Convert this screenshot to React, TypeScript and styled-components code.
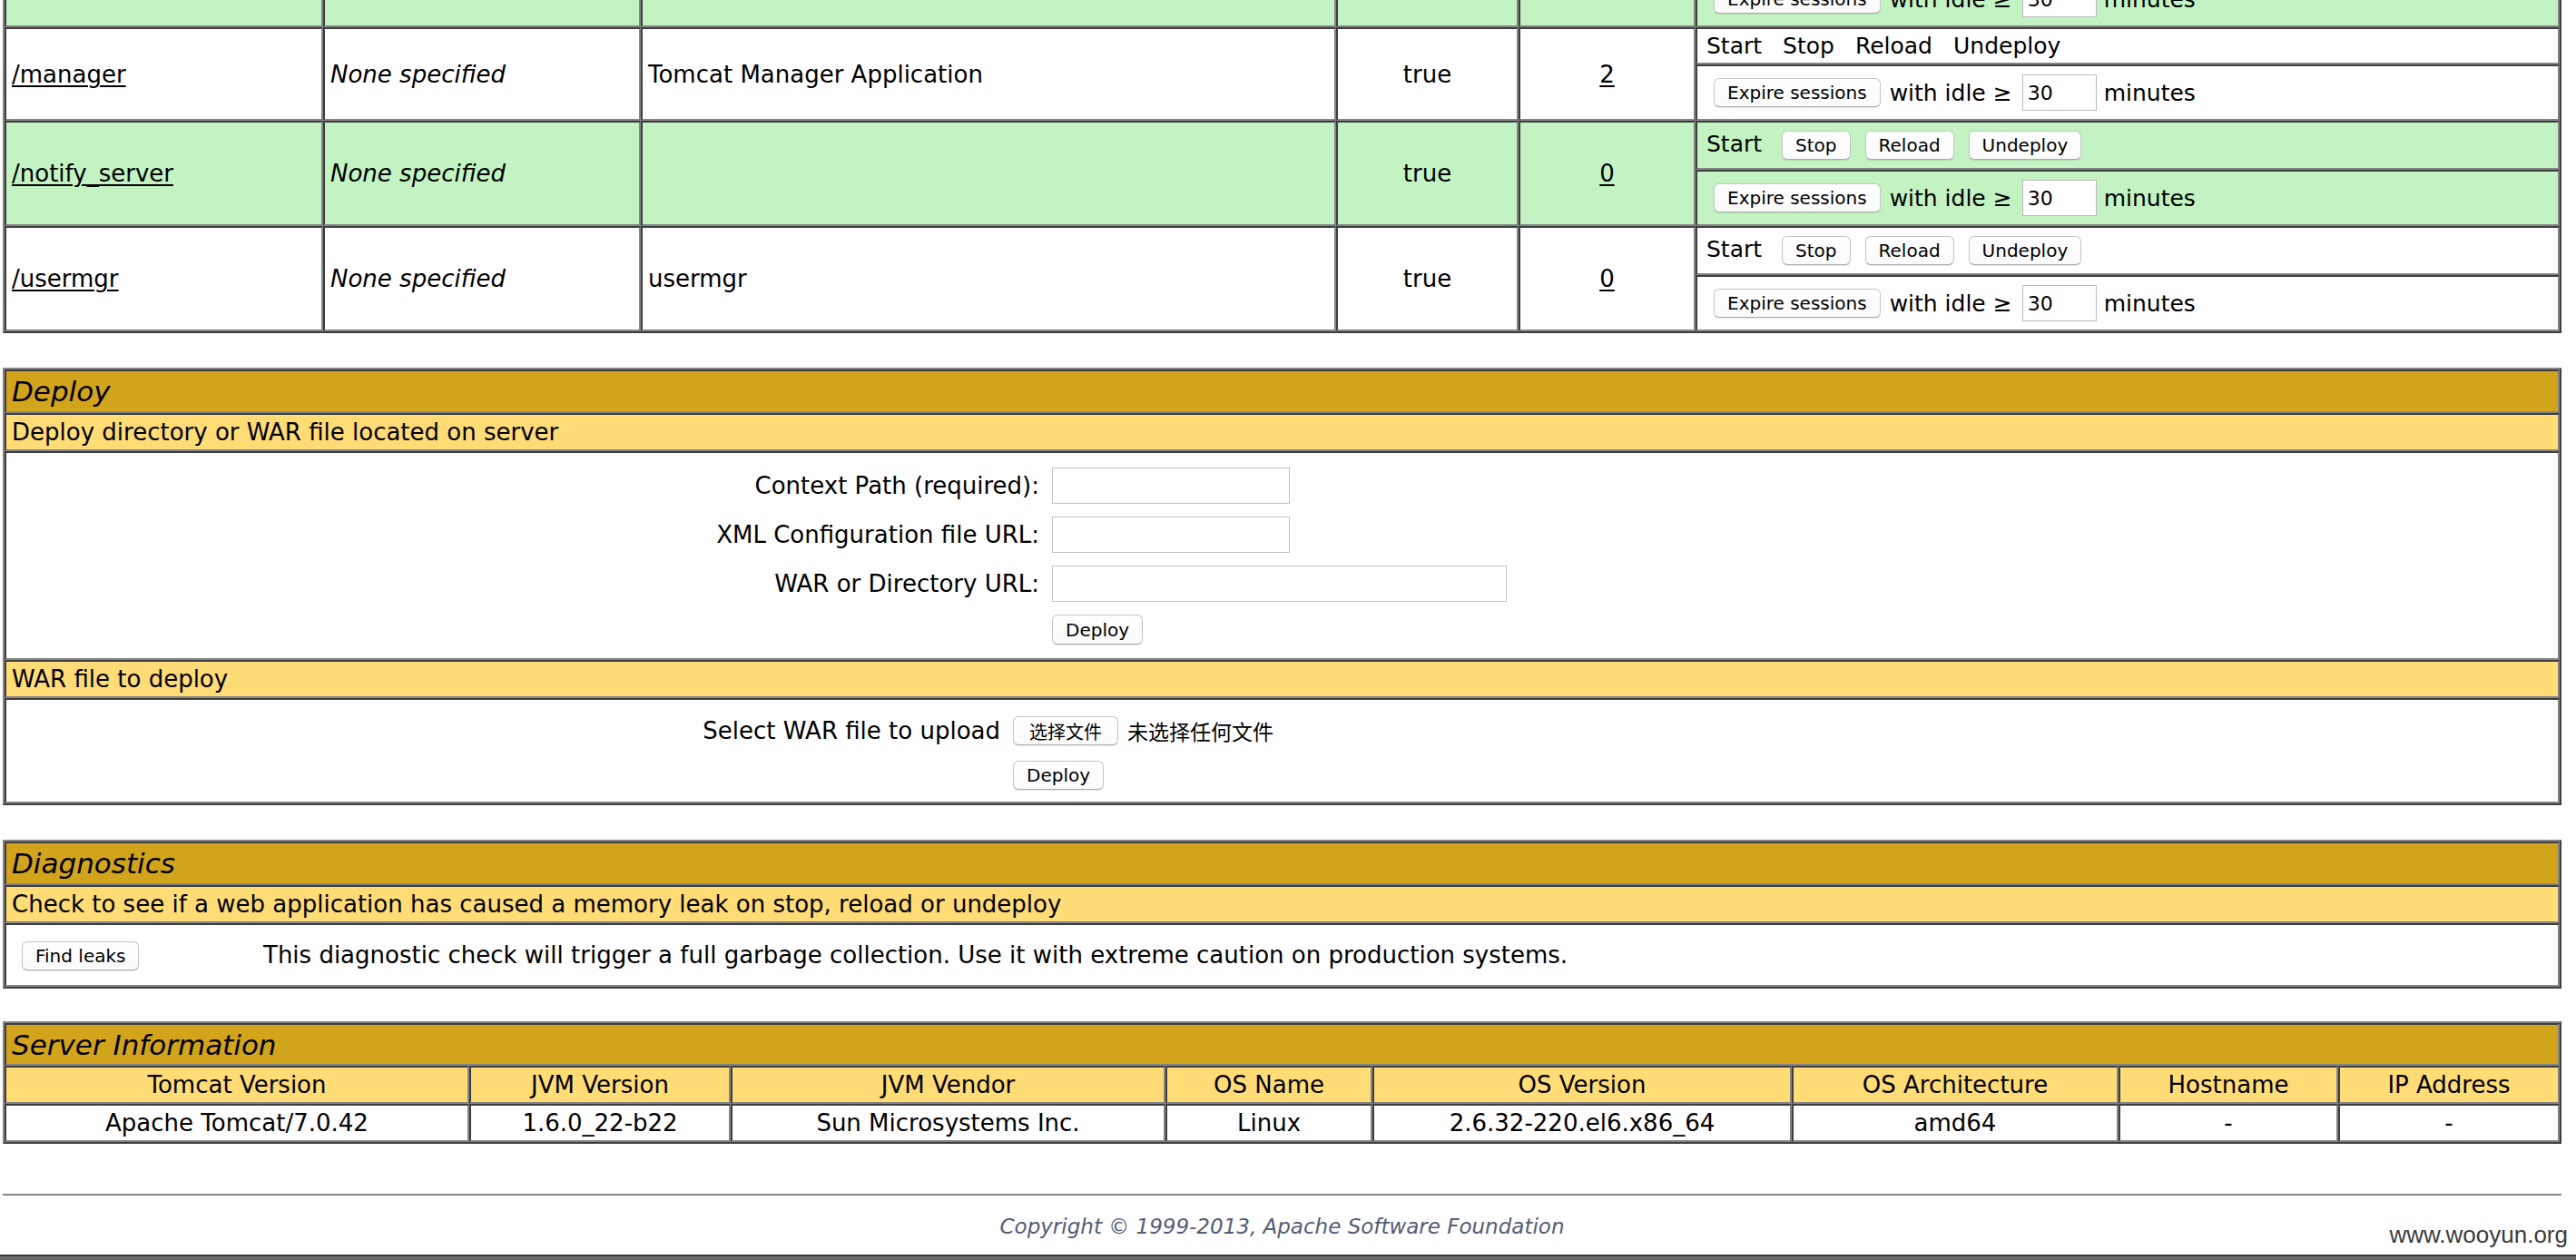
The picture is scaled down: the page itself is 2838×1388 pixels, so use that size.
import React from "react";
import styled, { createGlobalStyle, css } from "styled-components";

const GREEN = "#C3F3C3";
const WHITE = "#FFFFFF";
const TITLE_BG = "#D2A41C";
const HEADER_BG = "#FFDC75";
const FONT = `"DejaVu Sans", "Noto Sans CJK SC", sans-serif`;

const GlobalStyle = createGlobalStyle`
  * { box-sizing: border-box; }
  html, body { margin: 0; padding: 0; background: #ffffff; }
  body {
    font-family: ${FONT};
    font-size: 26px;
    color: #000;
    overflow: hidden;
  }
`;

const Page = styled.div`
  position: relative;
  width: 2838px;
  height: 1388px;
  overflow: hidden;
  padding-left: 3px;
  background: #fff;
`;

const Table = styled.table<{ $mt: number }>`
  width: 2819px;
  table-layout: fixed;
  border-collapse: separate;
  border-spacing: 0;
  border-style: solid;
  border-width: 2px;
  border-color: #858585 #3e3e3e #3e3e3e #858585;
  margin-top: ${(p) => p.$mt}px;
  font-family: ${FONT};
  font-size: 26px;
  color: #000;
`;

const Col = styled.col<{ $w: number }>`
  width: ${(p) => p.$w}px;
`;

const cellBase = css`
  border-style: solid;
  border-width: 2px;
  border-color: #3e3e3e #858585 #858585 #3e3e3e;
  padding: 0 6px;
  vertical-align: middle;
  white-space: nowrap;
  overflow: hidden;
`;

const TitleCell = styled.td<{ $h: number }>`
  ${cellBase}
  height: ${(p) => p.$h}px;
  background: ${TITLE_BG};
  font-style: italic;
  font-size: 31px;
  text-align: left;
`;

const HeaderCell = styled.td<{ $align?: string }>`
  ${cellBase}
  height: 42px;
  background: ${HEADER_BG};
  text-align: ${(p) => p.$align ?? "left"};
`;

const DataCell = styled.td`
  ${cellBase}
  height: 42px;
  background: #fff;
  text-align: center;
`;

const AppCell = styled.td<{ $bg: string; $align?: string }>`
  ${cellBase}
  background: ${(p) => p.$bg};
  text-align: ${(p) => p.$align ?? "left"};
`;

const CmdCell = styled.td<{ $bg: string; $h: number }>`
  ${cellBase}
  height: ${(p) => p.$h}px;
  background: ${(p) => p.$bg};
  padding: 0 10px;
  font-size: 25px;
`;

const FormCell = styled.td<{ $h: number }>`
  ${cellBase}
  height: ${(p) => p.$h}px;
  background: #fff;
  vertical-align: top;
`;

const DiagCell = styled.td`
  ${cellBase}
  height: 70px;
  background: #fff;
`;

const PathLink = styled.a`
  color: #000;
  text-decoration: underline;
  text-decoration-thickness: 2px;
  text-underline-offset: 3px;
`;

const Unspecified = styled.em`
  font-style: italic;
`;

const CmdText = styled.span`
  margin-right: 23px;
`;

const Button = styled.button<{ $ml?: number }>`
  font-family: ${FONT};
  font-size: 20px;
  color: #000;
  height: 32px;
  padding: 0 14px;
  margin: 0 0 0 ${(p) => p.$ml ?? 0}px;
  background: linear-gradient(#ffffff, #fbfbfb);
  border: 1px solid #c4c4c4;
  border-bottom-color: #acacac;
  border-radius: 6px;
  box-shadow: 0 1px 1px rgba(0, 0, 0, 0.1);
  vertical-align: baseline;
  white-space: nowrap;
`;

const ExpireForm = styled.form`
  display: flex;
  align-items: center;
  margin: 0 0 0 8px;
`;

const InlineText = styled.span<{ $ml: number }>`
  margin-left: ${(p) => p.$ml}px;
  white-space: nowrap;
`;

const IdleInput = styled.input`
  width: 82px;
  height: 40px;
  margin: 0 0 0 11px;
  padding: 0 5px;
  font-family: ${FONT};
  font-size: 22px;
  color: #000;
  background: #fff;
  border: 1px solid #bdbdbd;
`;

const FormGrid = styled.div<{ $labelWidth: number; $padTop: number; $gap: number }>`
  display: grid;
  grid-template-columns: ${(p) => p.$labelWidth}px max-content;
  column-gap: 14px;
  row-gap: ${(p) => p.$gap}px;
  align-items: center;
  padding-top: ${(p) => p.$padTop}px;
`;

const FieldLabel = styled.div`
  grid-column: 1;
  text-align: right;
  white-space: nowrap;
`;

const FieldControl = styled.div`
  grid-column: 2;
  display: flex;
  align-items: center;
`;

const TextField = styled.input<{ $w: number }>`
  width: ${(p) => p.$w}px;
  height: 40px;
  margin: 0;
  padding: 0 6px;
  font-family: ${FONT};
  font-size: 22px;
  background: #fff;
  border: 1px solid #c2c2c2;
`;

const FileButton = styled(Button)`
  font-family: "Noto Sans CJK SC", sans-serif;
  padding: 0 17px;
`;

const FileStatus = styled.span`
  margin-left: 10px;
  font-family: "Noto Sans CJK SC", sans-serif;
  font-size: 23px;
  white-space: nowrap;
`;

const DiagRow = styled.div`
  display: flex;
  align-items: center;
`;

const DiagButtonSlot = styled.div`
  width: 277px;
  flex: none;
  padding-left: 11px;
`;

const Rule = styled.div`
  width: 2819px;
  height: 2px;
  margin-top: 55px;
  background: #8a8a8a;
`;

const Copyright = styled.div`
  width: 2819px;
  margin-top: 20px;
  text-align: center;
  font-style: italic;
  font-size: 23px;
  line-height: 28px;
  color: #525d76;
`;

const FrameEdge = styled.div`
  position: absolute;
  left: 0;
  right: 0;
  bottom: 0;
  height: 6px;
  background: #6b6b6b;
  border-top: 2px solid #3a3a3a;
`;

const Watermark = styled.div`
  position: absolute;
  top: 1347px;
  right: 9px;
  font-family: "Liberation Sans", Arial, sans-serif;
  font-size: 26px;
  line-height: 1;
  color: #3c3c3c;
`;

type App = {
  path: string;
  version: string;
  name: string;
  running: string;
  sessions: string;
  bg: string;
  controls: "buttons" | "text" | "scrolled";
};

/* The first entry is the application row that is scrolled mostly out of view:
   only the lower part of its "expire sessions" line is still visible. */
const apps: App[] = [
  { path: "", version: "", name: "", running: "", sessions: "", bg: GREEN, controls: "scrolled" },
  { path: "/manager", version: "None specified", name: "Tomcat Manager Application", running: "true", sessions: "2", bg: WHITE, controls: "text" },
  { path: "/notify_server", version: "None specified", name: "", running: "true", sessions: "0", bg: GREEN, controls: "buttons" },
  { path: "/usermgr", version: "None specified", name: "usermgr", running: "true", sessions: "0", bg: WHITE, controls: "buttons" },
];

const appCols = [351, 350, 766, 201, 195, 952];
const serverCols = [512, 288, 479, 228, 462, 360, 242, 244];

const serverHeaders = [
  "Tomcat Version",
  "JVM Version",
  "JVM Vendor",
  "OS Name",
  "OS Version",
  "OS Architecture",
  "Hostname",
  "IP Address",
];
const serverValues = [
  "Apache Tomcat/7.0.42",
  "1.6.0_22-b22",
  "Sun Microsystems Inc.",
  "Linux",
  "2.6.32-220.el6.x86_64",
  "amd64",
  "-",
  "-",
];

const Commands: React.FC<{ kind: App["controls"] }> = ({ kind }) => {
  if (kind === "scrolled") return null;
  if (kind === "text")
    return (
      <>
        <CmdText>Start</CmdText>
        <CmdText>Stop</CmdText>
        <CmdText>Reload</CmdText>
        <CmdText>Undeploy</CmdText>
      </>
    );
  return (
    <>
      <span>Start</span>
      <Button type="button" $ml={22}>Stop</Button>
      <Button type="button" $ml={16}>Reload</Button>
      <Button type="button" $ml={16}>Undeploy</Button>
    </>
  );
};

const AppRows: React.FC<{ app: App }> = ({ app }) => (
  <>
    <tr>
      <AppCell rowSpan={2} $bg={app.bg}>
        {app.path && <PathLink href="#">{app.path}</PathLink>}
      </AppCell>
      <AppCell rowSpan={2} $bg={app.bg}>
        {app.version && <Unspecified>{app.version}</Unspecified>}
      </AppCell>
      <AppCell rowSpan={2} $bg={app.bg}>
        {app.name}
      </AppCell>
      <AppCell rowSpan={2} $bg={app.bg} $align="center">
        {app.running}
      </AppCell>
      <AppCell rowSpan={2} $bg={app.bg} $align="center">
        {app.sessions && <PathLink href="#">{app.sessions}</PathLink>}
      </AppCell>
      <CmdCell $bg={app.bg} $h={app.controls === "text" ? 41 : 54}>
        <Commands kind={app.controls} />
      </CmdCell>
    </tr>
    <tr>
      <CmdCell $bg={app.bg} $h={62}>
        <ExpireForm onSubmit={(e) => e.preventDefault()}>
          <Button type="button">Expire sessions</Button>
          <InlineText $ml={10}>with idle ≥</InlineText>
          <IdleInput type="text" defaultValue="30" size={5} />
          <InlineText $ml={8}>minutes</InlineText>
        </ExpireForm>
      </CmdCell>
    </tr>
  </>
);

export default function App() {
  return (
    <>
      <GlobalStyle />
      <Page>
        <Table $mt={-88}>
          <colgroup>
            {appCols.map((w, i) => (
              <Col key={i} $w={w} />
            ))}
          </colgroup>
          <tbody>
            {apps.map((app, i) => (
              <AppRows key={i} app={app} />
            ))}
          </tbody>
        </Table>

        <Table $mt={38}>
          <tbody>
            <tr>
              <TitleCell $h={48}>Deploy</TitleCell>
            </tr>
            <tr>
              <HeaderCell>Deploy directory or WAR file located on server</HeaderCell>
            </tr>
            <tr>
              <FormCell $h={230}>
                <FormGrid $labelWidth={1132} $padTop={16} $gap={14}>
                  <FieldLabel>Context Path (required):</FieldLabel>
                  <FieldControl>
                    <TextField type="text" $w={262} />
                  </FieldControl>
                  <FieldLabel>XML Configuration file URL:</FieldLabel>
                  <FieldControl>
                    <TextField type="text" $w={262} />
                  </FieldControl>
                  <FieldLabel>WAR or Directory URL:</FieldLabel>
                  <FieldControl>
                    <TextField type="text" $w={501} />
                  </FieldControl>
                  <FieldControl>
                    <Button type="button" style={{ height: 33 }}>Deploy</Button>
                  </FieldControl>
                </FormGrid>
              </FormCell>
            </tr>
            <tr>
              <HeaderCell>WAR file to deploy</HeaderCell>
            </tr>
            <tr>
              <FormCell $h={116}>
                <FormGrid $labelWidth={1089} $padTop={17} $gap={16}>
                  <FieldLabel>Select WAR file to upload</FieldLabel>
                  <FieldControl>
                    <FileButton type="button">选择文件</FileButton>
                    <FileStatus>未选择任何文件</FileStatus>
                  </FieldControl>
                  <FieldControl>
                    <Button type="button">Deploy</Button>
                  </FieldControl>
                </FormGrid>
              </FormCell>
            </tr>
          </tbody>
        </Table>

        <Table $mt={38}>
          <tbody>
            <tr>
              <TitleCell $h={48}>Diagnostics</TitleCell>
            </tr>
            <tr>
              <HeaderCell>
                Check to see if a web application has caused a memory leak on stop, reload or undeploy
              </HeaderCell>
            </tr>
            <tr>
              <DiagCell>
                <DiagRow>
                  <DiagButtonSlot>
                    <Button type="button">Find leaks</Button>
                  </DiagButtonSlot>
                  <span>
                    This diagnostic check will trigger a full garbage collection. Use it with extreme
                    caution on production systems.
                  </span>
                </DiagRow>
              </DiagCell>
            </tr>
          </tbody>
        </Table>

        <Table $mt={36}>
          <colgroup>
            {serverCols.map((w, i) => (
              <Col key={i} $w={w} />
            ))}
          </colgroup>
          <tbody>
            <tr>
              <TitleCell $h={47} colSpan={8}>
                Server Information
              </TitleCell>
            </tr>
            <tr>
              {serverHeaders.map((h) => (
                <HeaderCell key={h} $align="center">
                  {h}
                </HeaderCell>
              ))}
            </tr>
            <tr>
              {serverValues.map((v, i) => (
                <DataCell key={i}>{v}</DataCell>
              ))}
            </tr>
          </tbody>
        </Table>

        <Rule />
        <Copyright>Copyright © 1999-2013, Apache Software Foundation</Copyright>

        <Watermark>www.wooyun.org</Watermark>
        <FrameEdge />
      </Page>
    </>
  );
}
